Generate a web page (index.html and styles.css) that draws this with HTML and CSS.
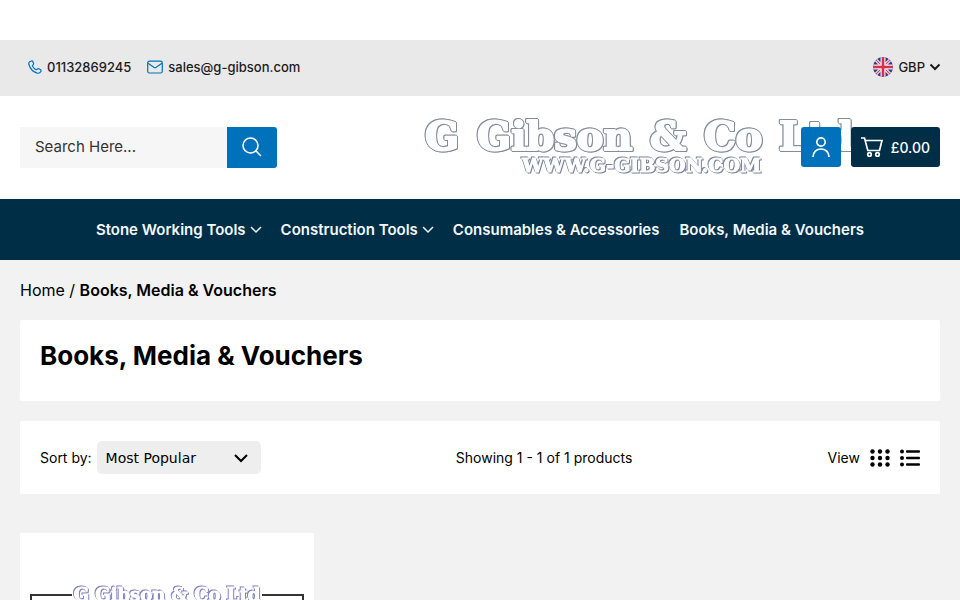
FILE: index.html
```html
<!DOCTYPE html>
<html lang="en">
<head>
  <meta charset="UTF-8">
  <meta name="viewport" content="width=device-width, initial-scale=1">
  <title>Books, Media &amp; Vouchers</title>
  <link rel="stylesheet" href="styles.css">
</head>
<body>
  <div class="topbar">
    <div class="contact">
      <a href="tel:01132869245">
        <svg width="14" height="14" viewBox="0 0 14 14" class="line-icon"><path d="M3.5 1 1.7 1.7C.8 2.3.6 3.4 1 4.7c1.200 4 4.300 7.200 8.300 8.400 1.500.4 2.700 0 3.400-1.300.6-1 .5-1.700-.4-2.300l-1.400-.8c-.7-.4-1.200-.2-1.700.4-.5.7-1 .8-1.700.3A9 9 0 0 1 4.700 6.500c-.4-.7-.3-1.100.3-1.600.7-.5.8-1 .5-1.700L4.900 1.700C4.600 1 4.100.8 3.500 1z"/></svg>
        01132869245
      </a>
      <a href="mailto:sales@g-gibson.com">
        <svg width="16" height="14" viewBox="0 0 16 14" class="line-icon"><rect x=".7" y="1.200" width="14.600" height="11.800" rx="1.800"/><path d="M1 3.200l5.800 4a2.200 2.200 0 0 0 2.400 0l5.800-4"/></svg>
        sales@g-gibson.com
      </a>
    </div>
    <button type="button" class="currency">
      <svg width="20" height="20" viewBox="0 0 20 20">
        <clipPath id="flag"><circle cx="10" cy="10" r="10"/></clipPath>
        <g clip-path="url(#flag)">
          <path fill="#2b3f92" d="M0 0h20v20H0z"/>
          <path stroke="#f3e9ee" stroke-width="3.200" d="M0 0l20 20M20 0L0 20"/>
          <path stroke="#d8495f" stroke-width="1.200" d="M0 0l20 20M20 0L0 20"/>
          <path stroke="#f6eef2" stroke-width="5" d="M10 0v20M0 10h20"/>
          <path stroke="#d6304a" stroke-width="2.600" d="M10 0v20M0 10h20"/>
        </g>
      </svg>
      GBP
      <svg width="10" height="6" viewBox="0 0 10 6" class="chevron bold"><path d="M.5.5L5 5 9.500.5"/></svg>
    </button>
  </div>

  <header class="header">
    <form class="search">
      <input type="text" name="q" placeholder="Search Here..." aria-label="Search">
      <button type="submit" aria-label="Search">
        <svg width="20" height="20" viewBox="0 0 20 20"><circle cx="8.500" cy="8.500" r="7.500"/><path d="M13.800 13.800L19 19"/></svg>
      </button>
    </form>
    <a href="#" class="logo">
      <svg width="432" height="62" viewBox="0 0 432 62">
        <g class="logo-name"><text x="2" y="34">G</text><text x="54" y="34">Gibson</text><text x="227" y="34">&amp;</text><text x="281" y="34">Co</text><text x="356" y="34">Ltd</text></g>
        <text class="logo-site" x="99" y="56">WWW.G-GIBSON.COM</text>
      </svg>
    </a>
    <div class="actions">
      <a href="#" class="account" aria-label="Account">
        <svg width="18" height="20" viewBox="0 0 18 20"><circle cx="9" cy="5" r="4.200"/><path d="M1 20c0-5 3.500-8 8-8s8 3 8 8"/></svg>
      </a>
      <a href="#" class="basket">
        <svg width="22" height="20" viewBox="0 0 22 20"><path d="M0 1h3.500l3.300 12.500h11.700L21 3.500H4.200"/><circle cx="8.500" cy="17.500" r="1.800"/><circle cx="16.500" cy="17.500" r="1.800"/></svg>
        £0.00
      </a>
    </div>
  </header>

  <nav class="nav">
    <a href="#">Stone Working Tools <svg width="10" height="6" viewBox="0 0 10 6" class="chevron"><path d="M0 0l5 5 5-5"/></svg></a>
    <a href="#">Construction Tools <svg width="10" height="6" viewBox="0 0 10 6" class="chevron"><path d="M0 0l5 5 5-5"/></svg></a>
    <a href="#">Consumables &amp; Accessories</a>
    <a href="#">Books, Media &amp; Vouchers</a>
  </nav>

  <main class="main">
    <div class="breadcrumb"><a href="#">Home</a> / <strong>Books, Media &amp; Vouchers</strong></div>

    <section class="panel title">
      <h1>Books, Media &amp; Vouchers</h1>
    </section>

    <section class="panel toolbar">
      <div class="sort">
        <label for="sort">Sort by:</label>
        <div class="select">
          <select id="sort">
            <option>Most Popular</option>
          </select>
          <svg width="14" height="8" viewBox="0 0 14 8" class="chevron bold"><path d="M1 1l6 6 6-6"/></svg>
        </div>
      </div>
      <p>Showing 1 - 1 of 1 products</p>
      <div class="view">
        View
        <button type="button" aria-label="Grid view">
          <svg width="20" height="18" viewBox="0 0 20 18"><circle cx="2.500" cy="2.500" r="2.200"/><circle cx="10" cy="2.500" r="2.200"/><circle cx="17.500" cy="2.500" r="2.200"/><circle cx="2.500" cy="9" r="2.200"/><circle cx="10" cy="9" r="2.200"/><circle cx="17.500" cy="9" r="2.200"/><circle cx="2.500" cy="15.500" r="2.200"/><circle cx="10" cy="15.500" r="2.200"/><circle cx="17.500" cy="15.500" r="2.200"/></svg>
        </button>
        <button type="button" aria-label="List view">
          <svg width="20" height="18" viewBox="0 0 20 18"><circle cx="2" cy="2.500" r="2"/><circle cx="2" cy="9" r="2"/><circle cx="2" cy="15.500" r="2"/><rect x="6" y="1.300" width="14" height="2.500" rx="1"/><rect x="6" y="7.800" width="14" height="2.500" rx="1"/><rect x="6" y="14.300" width="14" height="2.500" rx="1"/></svg>
        </button>
      </div>
    </section>

    <section class="products">
      <a href="#" class="product">
        <svg viewBox="0 0 274 274">
          <path class="frame" d="M42 52H1v180h272V52h-41"/>
          <text class="card-name" x="137" y="58">G Gibson &amp; Co Ltd</text>
        </svg>
      </a>
    </section>
  </main>
</body>
</html>
```
FILE: styles.css
```css
* { box-sizing: border-box; }
body { margin: 0; padding-top: 40px; font-family: Inter, sans-serif; font-size: 14px; color: #000; background: #fff; }
a { color: inherit; text-decoration: none; }
button { border: 0; padding: 0; background: none; font: inherit; color: inherit; cursor: pointer; }
svg { display: block; flex-shrink: 0; }

.line-icon { fill: none; stroke: #0072bb; stroke-width: 1.2; }
.chevron { fill: none; stroke: currentColor; stroke-width: 1.5; overflow: visible; }
.chevron.bold { stroke-width: 2; }

.topbar { display: flex; justify-content: space-between; align-items: center; height: 56px; padding: 0 20px 2px 28px; background: #e9e9e9; color: #1c1c1c; font-size: 13px; font-weight: 500; }
.contact { display: flex; gap: 16px; }
.contact a { display: flex; align-items: center; gap: 5px; }
.currency { display: flex; align-items: center; gap: 5px; }

.header { display: flex; align-items: flex-start; padding: 31px 20px; }
.search { display: flex; height: 41px; }
.search input { width: 207px; border: 0; padding: 0 15px 2px; background: #f6f6f6; font: inherit; font-size: 15px; color: #333; }
.search input::placeholder { color: #333; }
.search button { display: flex; align-items: center; justify-content: center; width: 50px; padding-bottom: 2px; background: #0072bb; border-radius: 0 3px 3px 0; }
.search svg { fill: none; stroke: #fff; stroke-width: 1.6; }
.logo { margin: -11px -54px -10px auto; }
.logo-name, .logo-site { fill: #fbfdfe; stroke: #fbfdfe; stroke-width: 1; stroke-linejoin: round; }
.logo-name { font: bold 40px "DejaVu Serif", serif; stroke-width: 2; filter: drop-shadow(1px 0 #858c98) drop-shadow(0 1px #858c98) drop-shadow(-1px -1px #858c98); }
.logo-site { font: bold 19px "DejaVu Serif", serif; filter: drop-shadow(1px 1px #7d8496) drop-shadow(-1px -1px #7d8496); }
.actions { display: flex; gap: 10px; z-index: 1; }
.actions a { display: flex; align-items: center; justify-content: center; height: 40px; border-radius: 3px; color: #fff; }
.actions svg { fill: none; stroke: #fff; stroke-width: 1.7; }
.actions .account { width: 40px; background: #0072bb; }
.actions .basket { gap: 8px; padding: 0 10px; background: #002e47; font-size: 14px; font-weight: 500; }

.nav { display: flex; justify-content: center; align-items: center; gap: 20px; height: 61px; background: #002e47; color: #f2f8fb; font-size: 15px; font-weight: 600; }
.nav a { display: flex; align-items: center; gap: 5px; }

.main { padding: 20px; background: #f2f2f2; }
.breadcrumb { margin-bottom: 20px; font-size: 16px; line-height: 20px; }
.breadcrumb strong { font-weight: 600; }
.panel { padding: 20px; background: #fff; border-radius: 2px; }
.title { margin-bottom: 20px; padding-bottom: 30px; }
h1 { margin: 0; font-size: 26px; line-height: 31px; font-weight: 700; }

.toolbar { display: flex; justify-content: space-between; align-items: center; margin-bottom: 39px; }
.toolbar p { margin: 0; }
.sort { display: flex; align-items: center; gap: 5px; }
.select { display: flex; align-items: center; }
.select select { appearance: none; width: 164px; height: 33px; border: 0; border-radius: 5px; padding: 0 9px; background: #eee; color: #000; font: 14px "DejaVu Sans", sans-serif; }
.select svg { margin-left: -27px; margin-right: 13px; pointer-events: none; }
.view { display: flex; align-items: center; gap: 10px; }

.products { display: grid; grid-template-columns: repeat(3, 1fr); gap: 19px; }
.product { padding: 10px; background: #fff; }
.frame { fill: none; stroke: #333; stroke-width: 2; }
.card-name { font: bold 18px "DejaVu Serif", serif; text-anchor: middle; fill: #fff; stroke: #fff; stroke-width: 1; filter: drop-shadow(1px 1px #8080bc) drop-shadow(-1px -1px #8080bc); }
```
